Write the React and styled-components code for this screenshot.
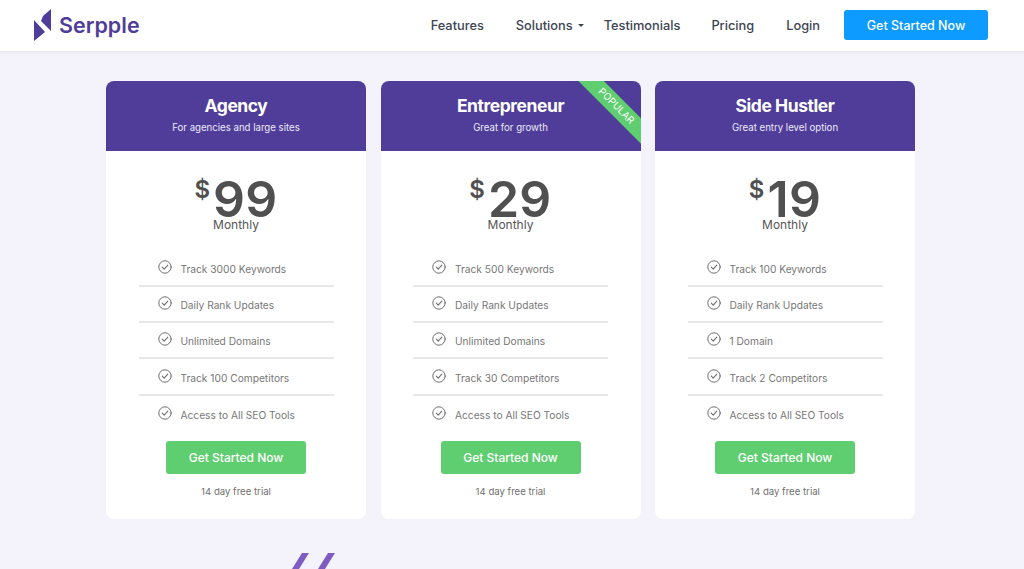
import styled, { createGlobalStyle } from "styled-components";

const GlobalStyle = createGlobalStyle`
  html, body {
    margin: 0;
    height: 569px;
    overflow: hidden;
    background: #f4f3fb;
    font-family: "Inter", "Liberation Sans", sans-serif;
  }
  * { box-sizing: border-box; }
`;

const plans = [
  {
    name: "Agency",
    tagline: "For agencies and large sites",
    price: 99,
    features: ["Track 3000 Keywords", "Daily Rank Updates", "Unlimited Domains", "Track 100 Competitors", "Access to All SEO Tools"],
  },
  {
    name: "Entrepreneur",
    tagline: "Great for growth",
    price: 29,
    popular: true,
    features: ["Track 500 Keywords", "Daily Rank Updates", "Unlimited Domains", "Track 30 Competitors", "Access to All SEO Tools"],
  },
  {
    name: "Side Hustler",
    tagline: "Great entry level option",
    price: 19,
    features: ["Track 100 Keywords", "Daily Rank Updates", "1 Domain", "Track 2 Competitors", "Access to All SEO Tools"],
  },
];

const Header = styled.header`
  height: 51px;
  background: #fff;
  box-shadow: 0 1px 3px rgba(40, 40, 90, 0.08);
  display: flex;
  align-items: center;
  padding: 0 36px 1px 34px;
`;

const Brand = styled.a`
  display: flex;
  align-items: center;
  gap: 7px;
  margin-right: auto;
  font-size: 21.5px;
  font-weight: 600;
  color: #4f3d99;
`;

const Nav = styled.nav`
  display: flex;
  align-items: center;
`;

const NavLink = styled.a`
  font-size: 12.8px;
  font-weight: 500;
  color: #3d4552;
  margin-right: ${(p) => p.$gap}px;
  display: flex;
  align-items: center;
  gap: 5px;
`;

const Caret = styled.span`
  width: 0;
  height: 0;
  margin-top: 1px;
  border-left: 3px solid transparent;
  border-right: 3px solid transparent;
  border-top: 3px solid #3d4552;
`;

const CtaButton = styled.a`
  width: 144px;
  height: 30px;
  border-radius: 3px;
  background: #0d9bff;
  color: #fff;
  font-size: 12.5px;
  font-weight: 500;
  display: flex;
  align-items: center;
  justify-content: center;
`;

const Cards = styled.main`
  display: flex;
  justify-content: center;
  gap: 14.5px;
  padding: 30px 3px 0 0;
`;

const Card = styled.article`
  width: 260px;
  height: 438px;
  background: #fff;
  border-radius: 8px;
  overflow: hidden;
  display: flex;
  flex-direction: column;
  align-items: center;
`;

const CardHead = styled.div`
  position: relative;
  overflow: hidden;
  width: 100%;
  height: 70px;
  background: #4f3d99;
  color: #fff;
  text-align: center;
  padding-top: 14px;
`;

const PlanName = styled.h2`
  margin: 0;
  font-size: 17.5px;
  line-height: 22px;
  font-weight: 700;
  letter-spacing: -0.45px;
`;

const Tagline = styled.p`
  margin: 4px 0 0;
  font-size: 9.65px;
  line-height: 14px;
  color: #ece9f8;
`;

const Ribbon = styled.div`
  position: absolute;
  top: 16px;
  right: -25px;
  width: 100px;
  height: 18.4px;
  background: #5fce70;
  color: #fff;
  font-size: 9.8px;
  line-height: 18.4px;
  text-align: center;
  transform: rotate(45deg);
`;

const Price = styled.div`
  display: flex;
  align-items: flex-start;
  justify-content: center;
  margin-top: 23px;
  height: 45px;
  color: #505050;
  font-weight: 600;
`;

const Currency = styled.span`
  font-size: 24px;
  line-height: 26px;
  margin-top: 3px;
  margin-right: 3px;
`;

const Amount = styled.span`
  font-size: 50px;
  line-height: 50px;
  letter-spacing: 0.3px;
`;

const Period = styled.div`
  font-size: 12px;
  line-height: 16px;
  color: #555;
  margin-top: -2.5px;
`;

const Features = styled.ul`
  list-style: none;
  margin: 18px 0 0;
  padding: 0;
  width: 195px;
`;

const Feature = styled.li`
  height: 36.3px;
  display: flex;
  align-items: center;
  gap: 9px;
  padding-left: 19px;
  font-size: 10.2px;
  color: #777;
  border-bottom: 2px solid #e8e8e8;
  &:last-child { border-bottom: 0; }
`;

const Check = styled.svg`
  width: 14px;
  height: 14px;
  flex: none;
  margin-top: -2px;
  color: #6f6f6f;
`;

const FeatureText = styled.span`
  position: relative;
  top: 1px;
`;

const PlanButton = styled.a`
  width: 140px;
  height: 33px;
  margin-top: 9px;
  border-radius: 3px;
  background: #5fce70;
  color: #fff;
  font-size: 12px;
  font-weight: 500;
  display: flex;
  align-items: center;
  justify-content: center;
`;

const Trial = styled.div`
  margin-top: 11px;
  font-size: 9.6px;
  line-height: 14px;
  color: #707070;
`;

const QuoteMark = styled.svg`
  display: block;
  width: 46px;
  height: 16px;
  margin: 34px 0 0 290px;
`;

const CheckIcon = () => (
  <Check viewBox="0 0 14 14" fill="none" stroke="currentColor" strokeLinecap="round" strokeLinejoin="round">
    <circle cx="7" cy="7" r="6.2" strokeWidth="1" />
    <path d="M4.3 7.2 6.2 9.1 9.8 5.2" strokeWidth="1.1" />
  </Check>
);

const Logo = () => (
  <svg width="18" height="33" viewBox="0 0 18 33" fill="#4f3d99">
    <path d="M0 11 11 23 0 32Z" />
    <path d="M17 0V22L7 12 9 7Z" />
  </svg>
);

const PlanCard = ({ plan }) => (
  <Card>
    <CardHead>
      <PlanName>{plan.name}</PlanName>
      <Tagline>{plan.tagline}</Tagline>
      {plan.popular && <Ribbon>POPULAR</Ribbon>}
    </CardHead>
    <Price>
      <Currency>$</Currency>
      <Amount>{plan.price}</Amount>
    </Price>
    <Period>Monthly</Period>
    <Features>
      {plan.features.map((f) => (
        <Feature key={f}>
          <CheckIcon />
          <FeatureText>{f}</FeatureText>
        </Feature>
      ))}
    </Features>
    <PlanButton>Get Started Now</PlanButton>
    <Trial>14 day free trial</Trial>
  </Card>
);

export default function App() {
  return (
    <>
      <GlobalStyle />
      <Header>
        <Brand>
          <Logo />
          Serpple
        </Brand>
        <Nav>
          <NavLink $gap={32}>Features</NavLink>
          <NavLink $gap={20}>
            Solutions <Caret />
          </NavLink>
          <NavLink $gap={31}>Testimonials</NavLink>
          <NavLink $gap={32}>Pricing</NavLink>
          <NavLink $gap={24}>Login</NavLink>
          <CtaButton>Get Started Now</CtaButton>
        </Nav>
      </Header>
      <Cards>
        {plans.map((plan) => (
          <PlanCard key={plan.name} plan={plan} />
        ))}
      </Cards>
      <QuoteMark viewBox="0 0 46 16" fill="#7e5cc4">
        <path d="M12 0H19L9 16H2Z" />
        <path d="M38 0H45L35 16H28Z" />
      </QuoteMark>
    </>
  );
}
